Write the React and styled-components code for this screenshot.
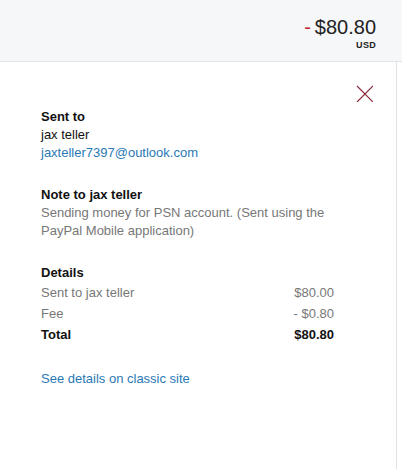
import React from 'react';
import styled, { createGlobalStyle } from 'styled-components';

const GlobalStyle = createGlobalStyle`
  html, body {
    margin: 0;
    padding: 0;
    background: #ffffff;
    font-family: "Liberation Sans", Arial, sans-serif;
  }
`;

const Page = styled.div`
  width: 402px;
  height: 469px;
  display: flex;
  flex-direction: column;
  overflow: hidden;
`;

const Header = styled.div`
  height: 62px;
  background: #f6f7f9;
  border-bottom: 1px solid #e1e4e8;
  display: flex;
  justify-content: flex-end;
  align-items: flex-start;
  padding: 15px 26px 0 0;
  box-sizing: border-box;
  flex-shrink: 0;
`;

const AmountBlock = styled.div`
  display: flex;
  flex-direction: column;
  align-items: flex-end;
`;

const Amount = styled.div`
  font-size: 20px;
  line-height: 24px;
  color: #222;
`;

const Minus = styled.span`
  color: #c4262e;
  margin-right: 4px;
`;

const Currency = styled.div`
  font-size: 9px;
  font-weight: bold;
  line-height: 11px;
  padding-top: 1px;
  color: #222;
  letter-spacing: 0.3px;
`;

const Panel = styled.div`
  position: relative;
  flex: 1;
  width: 397px;
  border-right: 1px solid #e2e2e2;
  padding: 46px 62px 0 41px;
  box-sizing: border-box;
  font-size: 13px;
  line-height: 18px;
`;

const CloseButton = styled.button`
  position: absolute;
  top: 22px;
  right: 23px;
  width: 18px;
  height: 18px;
  padding: 0;
  border: none;
  background: none;
  cursor: pointer;
  display: flex;
`;

const Section = styled.div`
  margin-bottom: ${(p) => (p.$last ? '25px' : '24px')};
`;

const Heading = styled.div`
  font-weight: bold;
  color: #111;
`;

const Plain = styled.div`
  color: #111;
`;

const Muted = styled.div`
  color: #777;
`;

const Link = styled.a`
  color: #2a79b5;
  text-decoration: none;
  display: block;
`;

const Row = styled.div`
  display: flex;
  justify-content: space-between;
  line-height: 21px;
  color: ${(p) => (p.$total ? '#111' : '#777')};
  font-weight: ${(p) => (p.$total ? 'bold' : 'normal')};
  &:first-of-type {
    margin-top: 1px;
  }
`;

const details = [
  { label: 'Sent to jax teller', value: '$80.00' },
  { label: 'Fee', value: '- $0.80' },
  { label: 'Total', value: '$80.80', total: true },
];

const App = () => {
  return (
    <Page>
      <GlobalStyle />
      <Header>
        <AmountBlock>
          <Amount>
            <Minus>-</Minus>$80.80
          </Amount>
          <Currency>USD</Currency>
        </AmountBlock>
      </Header>

      <Panel>
        <CloseButton aria-label="Close">
          <svg width="18" height="18" viewBox="0 0 18 18">
            <path d="M2 2 L18 18 M18 2 L2 18" stroke="#8a2a3c" strokeWidth="1.2" fill="none" />
          </svg>
        </CloseButton>

        <Section>
          <Heading>Sent to</Heading>
          <Plain>jax teller</Plain>
          <Link href="#">jaxteller7397@outlook.com</Link>
        </Section>

        <Section>
          <Heading>Note to jax teller</Heading>
          <Muted>Sending money for PSN account. (Sent using the PayPal Mobile application)</Muted>
        </Section>

        <Section $last>
          <Heading>Details</Heading>
          {details.map((d) => (
            <Row key={d.label} $total={d.total}>
              <span>{d.label}</span>
              <span>{d.value}</span>
            </Row>
          ))}
        </Section>

        <Link href="#">See details on classic site</Link>
      </Panel>
    </Page>
  );
};

export default App;
